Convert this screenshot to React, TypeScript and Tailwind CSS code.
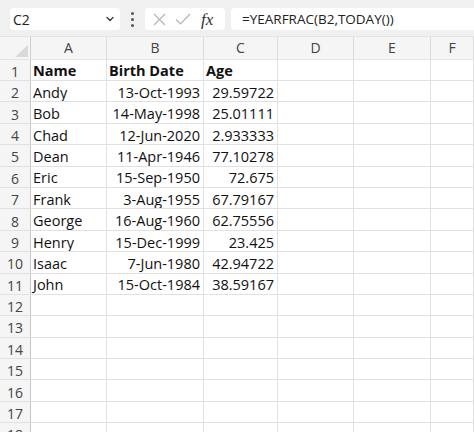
import { ChevronDown } from 'lucide-react'

type Row = { name: string; date: string; age: string }

const ROWS: Row[] = [
  { name: 'Andy', date: '13-Oct-1993', age: '29.59722' },
  { name: 'Bob', date: '14-May-1998', age: '25.01111' },
  { name: 'Chad', date: '12-Jun-2020', age: '2.933333' },
  { name: 'Dean', date: '11-Apr-1946', age: '77.10278' },
  { name: 'Eric', date: '15-Sep-1950', age: '72.675' },
  { name: 'Frank', date: '3-Aug-1955', age: '67.79167' },
  { name: 'George', date: '16-Aug-1960', age: '62.75556' },
  { name: 'Henry', date: '15-Dec-1999', age: '23.425' },
  { name: 'Isaac', date: '7-Jun-1980', age: '42.94722' },
  { name: 'John', date: '15-Oct-1984', age: '38.59167' },
]

const COLS = [
  { key: 'A', w: 'w-[76px] shrink-0' },
  { key: 'B', w: 'w-[97px] shrink-0' },
  { key: 'C', w: 'w-[74px] shrink-0' },
  { key: 'D', w: 'w-[76px] shrink-0' },
  { key: 'E', w: 'w-[77px] shrink-0' },
  { key: 'F', w: 'flex-1' },
]

const cellFont = "font-['Open_Sans',sans-serif] text-[14.5px] text-[#111]"

function FormulaBar() {
  return (
    <div className="h-[36px] bg-[#f0f0f0] flex items-start pt-[8px] pl-[10px]">
      <div className="w-[110px] shrink-0 h-[22px] bg-white rounded-[4px] flex items-center pl-[3px] pr-[4px]">
        <span className="font-['Open_Sans',sans-serif] text-[14px] text-[#222] flex-1">C2</span>
        <ChevronDown className="size-[12px] text-[#333]" strokeWidth={2.5} />
      </div>
      <div className="w-[25px] shrink-0 h-[22px] flex flex-col items-center justify-center gap-[3px]">
        <span className="size-[3px] rounded-full bg-[#555]" />
        <span className="size-[3px] rounded-full bg-[#555]" />
        <span className="size-[3px] rounded-full bg-[#555]" />
      </div>
      <div className="w-[80px] shrink-0 h-[22px] bg-white rounded-[4px] flex items-center pl-[8px] gap-[9px]">
        <svg width="13" height="13" viewBox="0 0 13 13" fill="none" stroke="#b5b5b5" strokeWidth="1.2">
          <path d="M1 1L12 12M12 1L1 12" />
        </svg>
        <svg width="16" height="12" viewBox="0 0 16 12" fill="none" stroke="#b5b5b5" strokeWidth="1.2">
          <path d="M1 6.5L5.5 11L15 1" />
        </svg>
        <span className="font-['Liberation_Serif',serif] italic text-[17px] text-[#333] leading-none ml-[1px]">
          fx
        </span>
      </div>
      <div className="ml-[6px] flex-1 min-w-0 h-[22px] bg-white rounded-l-[4px] flex items-center pl-[11px]">
        <span className="font-['Open_Sans',sans-serif] text-[13.5px] text-[#222] whitespace-nowrap">
          =YEARFRAC(B2,TODAY())
        </span>
      </div>
    </div>
  )
}

function HeaderRow() {
  return (
    <div className="flex h-[23.6px] bg-[#f5f5f5] border-t border-[#e4e4e4] border-b border-[#d0d0d0]">
      <div className="w-[31px] shrink-0 relative border-r border-[#d0d0d0]">
        <svg className="absolute right-[2px] bottom-[2px]" width="13" height="12" viewBox="0 0 13 12">
          <path d="M13 0L13 12L0 12Z" fill="#d9d9d9" />
        </svg>
      </div>
      {COLS.map((c) => (
        <div
          key={c.key}
          className={`${c.w} border-r border-[#dcdcdc] flex items-end justify-center pb-[1px] font-['Open_Sans',sans-serif] text-[14px] text-[#444]`}
        >
          {c.key}
        </div>
      ))}
    </div>
  )
}

function GridRow({ n, cells }: { n: number; cells: [string, string, string] }) {
  const bold = n === 1
  return (
    <div className="flex h-[21.4px] border-b border-[#e1e1e1]">
      <div className="w-[31px] shrink-0 bg-[#f5f5f5] border-r border-[#c8c8c8] flex items-center justify-center pt-[3px] font-['Open_Sans',sans-serif] text-[14px] text-[#444]">
        {n}
      </div>
      {COLS.map((c, i) => {
        const text = i < 3 ? cells[i] : ''
        const right = !bold && (i === 1 || i === 2)
        return (
          <div
            key={c.key}
            className={`${c.w} border-r border-[#e1e1e1] flex items-center pt-[3px] overflow-hidden whitespace-nowrap ${
              right ? 'justify-end pr-[3px]' : 'pl-[2px]'
            } ${cellFont} ${bold ? 'font-bold' : ''}`}
          >
            {text}
          </div>
        )
      })}
    </div>
  )
}

export default function App() {
  const rows: [string, string, string][] = [
    ['Name', 'Birth Date', 'Age'],
    ...ROWS.map((r) => [r.name, r.date, r.age] as [string, string, string]),
  ]
  while (rows.length < 18) rows.push(['', '', ''])
  return (
    <div className="w-[474px] h-[432px] overflow-hidden bg-white">
      <FormulaBar />
      <HeaderRow />
      {rows.map((cells, i) => (
        <GridRow key={i} n={i + 1} cells={cells} />
      ))}
    </div>
  )
}
